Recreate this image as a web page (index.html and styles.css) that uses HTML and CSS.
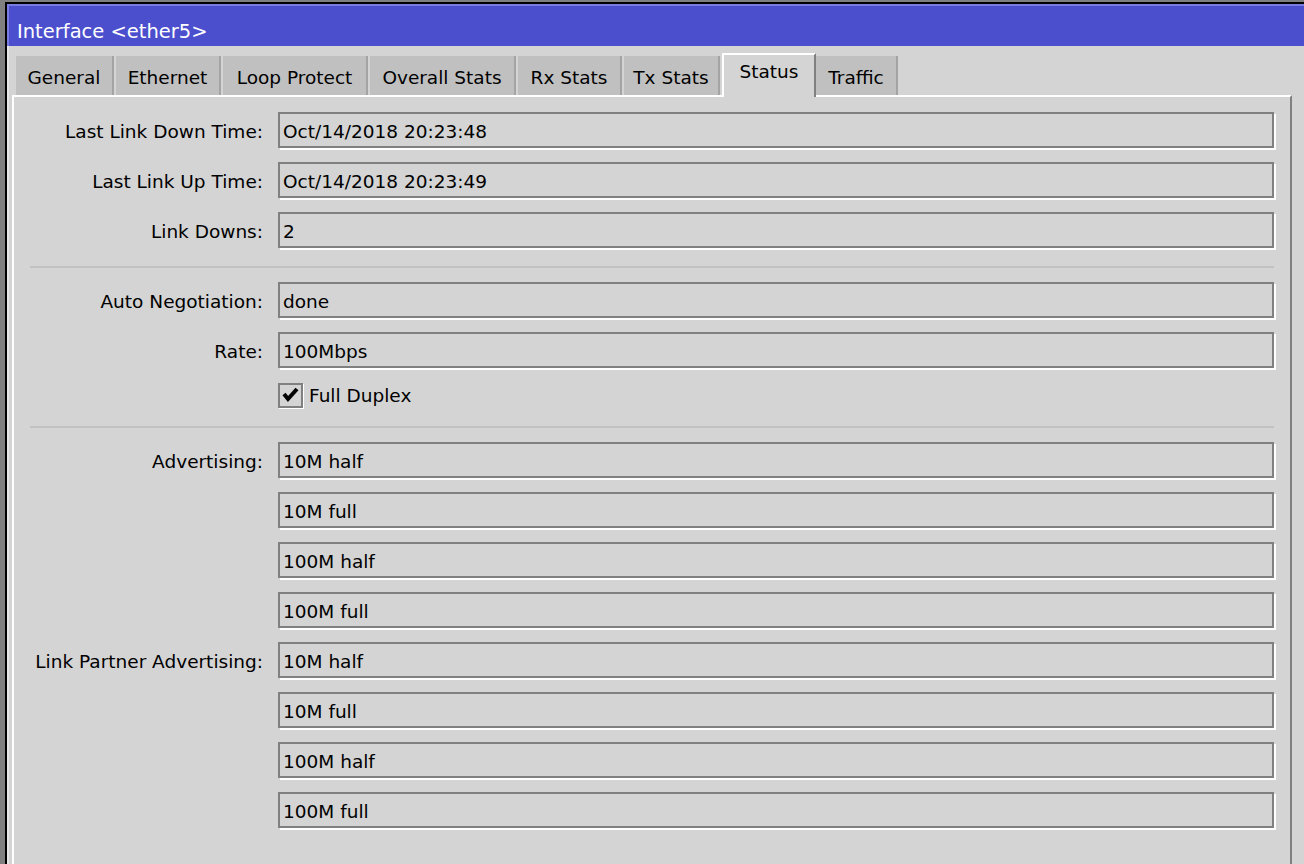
FILE: index.html
```html
<!DOCTYPE html>
<html lang="en">
<head>
<meta charset="utf-8">
<title>Interface &lt;ether5&gt;</title>
<link rel="stylesheet" href="styles.css">
</head>
<body>
<div class="window">
  <div class="titlebar">Interface &lt;ether5&gt;</div>
  <div class="body">
    <div class="tabs">
      <div class="tab tab-general">General</div>
      <div class="tab tab-ethernet">Ethernet</div>
      <div class="tab tab-loop">Loop Protect</div>
      <div class="tab tab-overall">Overall Stats</div>
      <div class="tab tab-rx">Rx Stats</div>
      <div class="tab tab-tx">Tx Stats</div>
      <div class="tab tab-status active">Status</div>
      <div class="tab tab-traffic">Traffic</div>
    </div>
    <div class="panel">
      <div class="form">
        <div class="row"><span class="label">Last Link Down Time:</span><div class="field">Oct/14/2018 20:23:48</div></div>
        <div class="row"><span class="label">Last Link Up Time:</span><div class="field">Oct/14/2018 20:23:49</div></div>
        <div class="row"><span class="label">Link Downs:</span><div class="field">2</div></div>
        <div class="sep"></div>
        <div class="row"><span class="label">Auto Negotiation:</span><div class="field">done</div></div>
        <div class="row"><span class="label">Rate:</span><div class="field">100Mbps</div></div>
        <div class="row check-row"><span class="label"></span>
          <div class="check">
            <span class="box"><svg width="21" height="21" viewBox="0 0 21 21"><polyline points="4,9 8,14 17,4" fill="none" stroke="#000" stroke-width="4"/></svg></span>
            <span class="check-text">Full Duplex</span>
          </div>
        </div>
        <div class="sep"></div>
        <div class="row"><span class="label">Advertising:</span><div class="field">10M half</div></div>
        <div class="row"><span class="label"></span><div class="field">10M full</div></div>
        <div class="row"><span class="label"></span><div class="field">100M half</div></div>
        <div class="row"><span class="label"></span><div class="field">100M full</div></div>
        <div class="row"><span class="label">Link Partner Advertising:</span><div class="field">10M half</div></div>
        <div class="row"><span class="label"></span><div class="field">10M full</div></div>
        <div class="row"><span class="label"></span><div class="field">100M half</div></div>
        <div class="row"><span class="label"></span><div class="field">100M full</div></div>
      </div>
    </div>
  </div>
</div>
</body>
</html>
```

FILE: styles.css
```css
html, body {
  margin: 0;
  padding: 0;
  background: #808080;
  height: 100%;
  overflow: hidden;
}

body {
  font-family: "DejaVu Sans", Verdana, sans-serif;
  font-size: 18.5px;
  color: #000;
}

.window {
  margin: 2px 0 0 5px;
  border-top: 2px solid #000;
  border-left: 2px solid #000;
  height: calc(100% - 4px);
  background: #d4d4d4;
}

.titlebar {
  box-sizing: border-box;
  height: 42px;
  background: #4b4fcd;
  border-top: 2px solid #7a7de0;
  border-left: 2px solid #7a7de0;
  color: #fff;
  font-size: 19.5px;
  line-height: 22px;
  padding: 15px 0 0 8px;
  white-space: nowrap;
}

.body {
  border-left: 2px solid #e6e6e6;
  height: 100%;
  background: #d4d4d4;
}

.tabs {
  display: flex;
  align-items: flex-end;
  padding: 7px 0 0 7px;
  height: 42px;
}

.tab {
  box-sizing: border-box;
  height: 39px;
  background: #c0c0c0;
  border-right: 2px solid #a4a4a4;
  margin-right: 2px;
  padding-top: 11px;
  line-height: 21px;
  text-align: center;
  white-space: nowrap;
}

.tab-general { width: 98px; }
.tab-ethernet { width: 105px; }
.tab-loop { width: 145px; }
.tab-overall { width: 146px; }
.tab-rx { width: 104px; }
.tab-tx { width: 96px; }
.tab-status { width: 94px; }
.tab-traffic { width: 82px; }

.tab.active {
  height: 44px;
  background: #d4d4d4;
  border-top: 2px solid #fff;
  border-left: 2px solid #fff;
  border-right: 2px solid #808080;
  margin-right: 0;
  margin-bottom: -2px;
  padding-top: 6px;
  position: relative;
  z-index: 1;
}

.panel {
  margin: 0 12px 0 3px;
  border-top: 2px solid #fff;
  border-left: 2px solid #fff;
  border-right: 2px solid #808080;
  height: 100%;
  background: #d4d4d4;
}

.form {
  display: flex;
  flex-direction: column;
  gap: 14px;
  padding: 15px 16px 0 0;
}

.row {
  display: grid;
  grid-template-columns: 249px 1fr;
  column-gap: 15px;
  align-items: center;
}

.label {
  text-align: right;
  white-space: nowrap;
  line-height: 22px;
  padding-top: 3px;
}

.field {
  box-sizing: border-box;
  height: 36px;
  border: 2px solid #808080;
  box-shadow: 2px 2px 0 #fff;
  padding: 4px 0 0 3px;
  line-height: 28px;
  white-space: nowrap;
}

.sep {
  height: 2px;
  background: #c2c2c2;
  margin: 4px 0 0 16px;
}

.check-row {
  height: 26px;
}

.check {
  display: flex;
  align-items: center;
}

.box {
  box-sizing: border-box;
  width: 25px;
  height: 25px;
  border: 2px solid #808080;
  box-shadow: 1px 1px 0 #fff;
  display: flex;
}

.check-text {
  margin-left: 6px;
  line-height: 22px;
  padding-top: 2px;
}
```
